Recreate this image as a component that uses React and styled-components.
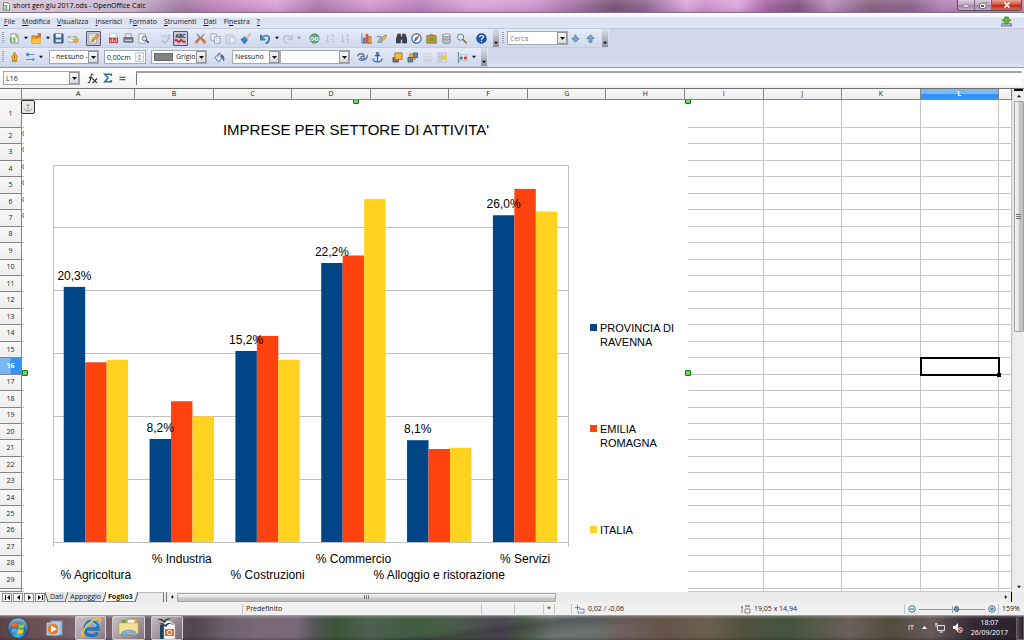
import React, { useState } from "react";
import styled, { createGlobalStyle, css } from "styled-components";

const GlobalStyle = createGlobalStyle`
  * {
    box-sizing: border-box;
  }
  body {
    margin: 0;
    font-family: "Open Sans", "Noto Sans", sans-serif;
    font-size: 7px;
    line-height: 10px;
    color: #1a1a1a;
  }
  button, input, select {
    font: inherit;
    color: inherit;
    margin: 0;
    padding: 0;
    border: none;
    border-radius: 0;
    background: none;
  }
`;

const Window = styled.div`
  display: flex;
  flex-direction: column;
  height: 100vh;
  overflow: hidden;
  background: #f0f0f0;
`;

/* ---------- title bar and menu ---------- */

const TitleBar = styled.header`
  display: flex;
  align-items: center;
  height: 13px;
  flex: none;
  padding-left: 2px;
  border-bottom: 1px solid #85708a;
  background:
    linear-gradient(90deg, rgba(240, 234, 244, 0.7), rgba(236, 228, 240, 0.55) 13%, transparent 18%),
    linear-gradient(rgba(255, 255, 255, 0.12), transparent 60%, rgba(110, 70, 120, 0.2)),
    linear-gradient(
      90deg, #a585ab 0%, #9a779c 17%, #c78ac0 22%, #d9a2d5 27%, #ad7aae 31%, #d49bd1 36%,
      #b77fb8 41%, #dba6d9 46%, #cf98d0 52%, #a574a8 56%, #795475 60%, #8f6791 63%,
      #dca5dc 67%, #cb92cb 69%, #dfa9df 72%, #a463a4 75%, #84557f 78%, #b98dbb 81%,
      #87617f 85%, #8c648c 89%, #b384b5 92%, #c58fc8 100%
    );
`;

const Title = styled.h1`
  margin: 0 auto 0 2px;
  font-size: 7px;
  font-weight: 400;
  color: #000;
`;

const WindowButtons = styled.div`
  display: flex;
  align-self: flex-start;
  height: 11px;
  margin-right: 2px;
  border: 1px solid #5f4a64;
  border-top: none;
  border-radius: 0 0 3px 3px;
  overflow: hidden;
`;

const WindowButton = styled.button`
  display: flex;
  align-items: center;
  justify-content: center;
  width: ${(p) => (p.$close ? 29 : 17)}px;
  border-right: ${(p) => (p.$close ? "none" : "1px solid #7d6683")};
  background: ${(p) =>
    p.$close
      ? "linear-gradient(#e9a79b, #d4533f 45%, #bb2412 50%, #d96a4e)"
      : "linear-gradient(#dccbe0, #c0a8c6 45%, #9d80a5 50%, #c5abc9)"};
`;

const MenuBar = styled.nav`
  display: flex;
  align-items: center;
  gap: 7px;
  height: 16px;
  flex: none;
  padding: 2px 12px 0 4px;
  border-bottom: 1px solid #c3c8d6;
  background: linear-gradient(#fff, #f2f5fb 25%, #dbe1f1 35%, #dfe5f4);
`;

const MenuItem = styled.button`
  u {
    text-underline-offset: 1px;
  }
`;

const UpdateButton = styled.button`
  display: flex;
  margin-left: auto;
`;

/* ---------- toolbars ---------- */

const Toolbars = styled.div`
  display: flex;
  flex-direction: column;
  flex: none;
  background: linear-gradient(#d3d9eb 80%, #dfe5f5);
  border-bottom: 1px solid #9299a5;
`;

const ToolbarRow = styled.div`
  display: flex;
  height: 19px;
`;

const Toolbar = styled.div`
  display: flex;
  align-items: center;
  height: 19px;
  padding-left: 2px;
  background: linear-gradient(#e6ebf8, #d8dff1 60%, #d0d8ec);
  border-bottom: 1px solid #c4cbdc;
`;

const Grip = styled.span`
  width: 2px;
  height: 12px;
  margin-right: 3px;
  background: repeating-linear-gradient(#98a2b8 0 1px, transparent 1px 2px);
`;

const ToolButton = styled.button`
  display: flex;
  align-items: center;
  justify-content: center;
  width: 15px;
  height: 15px;
  flex: none;
  opacity: ${(p) => (p.disabled ? 0.4 : 1)};
  ${(p) =>
    p.$pressed &&
    css`
      border: 1px solid #54596a;
      border-radius: 1px;
      background: #c3c8dc;
    `}
`;

const CaretButton = styled.button`
  display: flex;
  align-items: center;
  justify-content: center;
  width: 7px;
  height: 15px;
  opacity: ${(p) => (p.disabled ? 0.35 : 1)};
`;

const Separator = styled.span`
  width: ${(p) => (p.$wide ? 7 : 5)}px;
  height: 13px;
  flex: none;
`;

const Overflow = styled.button`
  display: flex;
  align-items: flex-end;
  justify-content: center;
  align-self: stretch;
  width: 6px;
  margin: 0 1px 0 4px;
  padding-bottom: 2px;
  background: linear-gradient(#dcdfe6, #8d929c);
`;

const Field = styled.div`
  display: flex;
  align-items: center;
  width: ${(p) => p.$width}px;
  height: 14px;
  margin-left: ${(p) => p.$gap || 0}px;
  padding-left: 2px;
  border: 1px solid #a3a8b3;
  background: #fff;
  select, input {
    flex: 1;
    min-width: 0;
    height: 12px;
    outline: none;
    appearance: none;
  }
  input::placeholder {
    color: #808080;
    opacity: 1;
  }
`;

const DropMark = styled.span`
  display: flex;
  align-items: center;
  justify-content: center;
  width: 10px;
  height: 12px;
  flex: none;
  border: 1px solid #92969e;
  background: linear-gradient(#f7f7f7, #d9d9d9);
  pointer-events: none;
`;

const Swatch = styled.span`
  width: 19px;
  height: 8px;
  flex: none;
  margin-right: 3px;
  background: #828282;
  border: 1px solid #6c6c6c;
`;

const Stepper = styled.div`
  display: flex;
  flex-direction: column;
  width: 9px;
  height: 10px;
  margin-right: 1px;
  border: 1px solid #c9ccd2;
  button {
    display: flex;
    align-items: center;
    justify-content: center;
    flex: 1;
    background: #f1f1f1;
  }
`;

/* ---------- formula bar ---------- */

const FormulaBar = styled.div`
  display: flex;
  align-items: center;
  height: 20px;
  flex: none;
  padding: 0 2px 0 3px;
  background: linear-gradient(#fff 15%, #f1f1f1);
`;

const FormulaTools = styled.div`
  display: flex;
  margin: 0 6px 0 5px;
`;

const FormulaInput = styled.input`
  flex: 1;
  min-width: 0;
  height: 14px;
  padding: 0 3px;
  border-top: 2px solid #a3a3a3;
  border-left: 1px solid #777;
  background: #fff;
  outline: none;
`;

/* ---------- sheet ---------- */

const SheetArea = styled.main`
  display: flex;
  flex: 1;
  min-height: 0;
  border-top: 1px solid #707070;
`;

const SheetView = styled.div`
  position: relative;
  flex: 1;
  min-width: 0;
  overflow: hidden;
  background: #fff;
`;

const Grid = styled.table`
  display: grid;
  width: 100%;
  height: 100%;
  grid-template-columns: 22px 114fr repeat(11, 79fr) 13fr;
  grid-template-rows: 11px 28px repeat(28, 33fr) 7fr;
  thead, tbody, tr {
    display: contents;
  }
`;

const Heading = styled.th`
  display: flex;
  align-items: center;
  justify-content: center;
  min-width: 0;
  min-height: 0;
  padding: 0;
  overflow: hidden;
  z-index: ${(p) => (p.scope === "col" ? 3 : 0)};
  font-weight: ${(p) => (p.$active ? 700 : 400)};
  color: ${(p) => (p.$active ? "#fff" : "#222")};
  border-right: 1px solid #858585;
  border-bottom: 1px solid #858585;
  background: ${(p) =>
    p.$active
      ? `linear-gradient(${p.scope === "row" ? "90deg" : "180deg"}, #7ab8f5 48%, #3294f8 52%)`
      : "linear-gradient(#f8f8f8, #eee)"};
`;

const Cell = styled.td`
  position: relative;
  min-width: 0;
  min-height: 0;
  padding: 1px 0 0;
  border-right: 1px solid #c6c6c6;
  border-bottom: 1px solid #c6c6c6;
  ${(p) =>
    p.$active &&
    css`
      outline: 2px solid #000;
      outline-offset: -1px;
      z-index: 1;
      &::after {
        content: "";
        position: absolute;
        right: -3px;
        bottom: -3px;
        width: 4px;
        height: 4px;
        background: #000;
      }
    `}
`;

// the chart is a floating object that lies over the cells
const ChartObject = styled.figure`
  position: absolute;
  top: 11px;
  left: 24px;
  width: 664px;
  height: 492px;
  margin: 0;
  background: #fff;
  z-index: 2;
`;

const Handle = styled.span`
  position: absolute;
  left: ${(p) => p.$x};
  top: ${(p) => p.$y}px;
  width: 6px;
  height: 6px;
  margin: -3px;
  border: 1px solid #087808;
  border-radius: 1px;
  background: #6ed66e;
`;

const AnchorMark = styled.span`
  position: absolute;
  left: 21px;
  top: 11px;
  display: flex;
  width: 14px;
  height: 14px;
  align-items: center;
  justify-content: center;
  border: 1px solid #333;
  border-radius: 2px;
  background: #e6e8e4;
  z-index: 3;
`;

const VScroll = styled.div`
  display: flex;
  flex-direction: column;
  align-items: center;
  width: 12px;
  flex: none;
  background: #ededed;
  border-left: 1px solid #e0e0e0;
`;

const SplitMark = styled.span`
  flex: none;
  background: #000;
  width: ${(p) => (p.$vertical ? "1px" : "9px")};
  height: ${(p) => (p.$vertical ? "10px" : "2px")};
`;

const ScrollButton = styled.button`
  display: flex;
  align-items: center;
  justify-content: center;
  width: 10px;
  height: 10px;
  flex: none;
`;

const VTrack = styled.div`
  flex: 1;
  width: 10px;
`;

const VThumb = styled.div`
  display: flex;
  align-items: center;
  justify-content: center;
  height: 48%;
  border: 1px solid #a0a0a0;
  border-radius: 1px;
  background: linear-gradient(90deg, #f5f5f5, #e2e2e2 45%, #c4c4c4 55%, #bfbfbf);
`;

/* ---------- sheet tabs ---------- */

const TabStrip = styled.div`
  display: flex;
  align-items: center;
  height: 10px;
  flex: none;
  padding: 0 12px 0 2px;
  background: #ececec;
`;

const TabNav = styled.div`
  display: flex;
  gap: 1px;
`;

const TabNavButton = styled.button`
  display: flex;
  align-items: center;
  justify-content: center;
  width: 10px;
  height: 9px;
  border: 1px solid #8e8e8e;
  background: #f6f6f6;
`;

const Tab = styled.button`
  height: 10px;
  padding: 0 2px;
  line-height: 9px;
  font-weight: ${(p) => (p.$active ? 700 : 400)};
  background: ${(p) => (p.$active ? "#fff" : "#e4e4e4")};
  border-bottom: 1px solid #777;
`;

const TabEdge = styled.svg`
  width: 3px;
  height: 10px;
  flex: none;
`;

const TabSpace = styled.span`
  width: 26px;
  height: 10px;
  border-top: 1px solid #bbb;
  border-right: 1px solid #777;
`;

const TabSplit = styled.span`
  width: 3px;
  height: 10px;
  border-right: 1px solid #777;
`;

const HTrack = styled.div`
  flex: 1;
`;

const HThumb = styled.div`
  display: flex;
  align-items: center;
  justify-content: center;
  width: 46%;
  height: 9px;
  border: 1px solid #a6a6a6;
  border-radius: 1px;
  background: linear-gradient(#f4f4f4, #e3e3e3 45%, #c9c9c9 55%, #c2c2c2);
`;

/* ---------- status bar ---------- */

const StatusBar = styled.footer`
  display: flex;
  align-items: center;
  height: 14px;
  flex: none;
  padding-top: 1px;
  background: #f1f0f0;
  border-bottom: 1px solid #9c9c9c;
`;

const StatusItem = styled.span`
  display: flex;
  align-items: center;
  gap: 3px;
  width: ${(p) => (p.$width ? `${p.$width}px` : "auto")};
  flex: ${(p) => p.$grow || "none"};
  height: 10px;
  padding-left: 3px;
  border-left: 1px solid ${(p) => (p.$plain ? "transparent" : "#c4c4c4")};
  white-space: nowrap;
`;

const ZoomSlider = styled.input`
  width: 66px;
  height: 9px;
  appearance: none;
  background:
    linear-gradient(#9aa0a8, #9aa0a8) 50% 50% / 1px 7px no-repeat,
    linear-gradient(#8e959f, #8e959f) 0 50% / 100% 1px no-repeat;
  &::-webkit-slider-thumb {
    appearance: none;
    width: 5px;
    height: 6px;
    border-radius: 3px;
    border: 1px solid #2f6584;
    background: #6499b5;
  }
`;

/* ---------- task bar ---------- */

const TaskBar = styled.div`
  display: flex;
  align-items: center;
  height: 24px;
  flex: none;
  padding-left: 7px;
  color: #fff;
  background:
    linear-gradient(rgba(255, 255, 255, 0.22), transparent 12%, transparent 85%, rgba(0, 0, 0, 0.2)),
    linear-gradient(172deg, transparent 46%, rgba(40, 28, 42, 0.3) 50%, transparent 58%),
    linear-gradient(
      90deg, #5b444a 0%, #6d5158 4%, #7c6670 8%, #6b5a63 14%, #52454c 19%, #6b606b 22%, #796875 25%,
      #78687a 29%, #4f5450 31%, #3a5639 33%, #50604f 36%, #3f5c43 40%, #4a5d49 44%,
      #4d4754 49%, #4a5a48 51%, #6e7673 54%, #68706c 58%, #705f5c 61%, #655348 65%,
      #6b5e4e 69%, #4f513d 73%, #44543e 77%, #6a5f57 83%, #504c3e 87%, #67595a 91%, #352a33 95%, #29212a 100%
    );
`;

const TaskButton = styled.button`
  display: flex;
  align-items: center;
  justify-content: center;
  width: ${(p) => p.$width || 31}px;
  height: 24px;
  margin-left: ${(p) => p.$gap || 0}px;
  ${(p) =>
    p.$open &&
    css`
      border: 1px solid rgba(235, 230, 235, 0.65);
      border-radius: 2px;
      background: linear-gradient(135deg, rgba(255, 255, 255, 0.6), rgba(210, 200, 210, 0.25));
    `}
`;

const Tray = styled.div`
  display: flex;
  align-items: center;
  gap: 8px;
  margin-left: auto;
`;

const Clock = styled.time`
  text-align: center;
`;

const ShowDesktop = styled.button`
  width: 8px;
  height: 24px;
  border: 1px solid #6b616b;
  background: linear-gradient(90deg, #574c57, #28212a);
`;

/* ---------- drawings ---------- */

const glyphs = {
  calc: (
    <>
      <path d="M2 1h6l2 2v8H2z" fill="#f5f8ee" stroke="#4f7841" />
      <path d="M1 4h6v6H1z" fill="#69a84c" />
      <path d="M2 6h4M2 8h4M4 5v5" stroke="#fff" strokeWidth=".7" />
      <path d="M7 2h3v3" stroke="#d8c335" fill="none" strokeWidth="1.5" />
    </>
  ),
  newDoc: (
    <>
      <path d="M2 1h6l2 2v8H2z" fill="#f4f8f0" stroke="#6e7d68" strokeWidth=".8" />
      <path d="M1 5h6v5H1z" fill="#68a443" />
      <path d="M2 6.5h4M2 8.5h4M4 5v5" stroke="#fff" strokeWidth=".7" />
      <path d="M7 0l1 2 3 0-2 2 0 2-2-2z" fill="#a9c43d" />
    </>
  ),
  open: (
    <>
      <path d="M1 3h4l1 1h4v7H1z" fill="#eda521" stroke="#b46b13" strokeWidth=".8" />
      <path d="M2 6h9l-1 5H1z" fill="#ffc845" />
      <path d="M5 6l4-4M7 1h3v3" stroke="#db4f1c" fill="none" strokeWidth="1.4" />
    </>
  ),
  save: (
    <>
      <path d="M1 1h10v10H1z" fill="#426f92" stroke="#294d6c" strokeWidth=".8" />
      <path d="M3 1h6v4H3z" fill="#e9eff4" />
      <path d="M3 7h6v3H3z" fill="#d7e0e7" />
    </>
  ),
  mail: (
    <>
      <path d="M0 4h9v6H0z" fill="#f6f3e8" stroke="#8c8e92" strokeWidth=".8" />
      <path d="M0 4l4.500 3L9 4" fill="none" stroke="#8c8e92" strokeWidth=".7" />
      <path d="M6 7h3V5l3 3-3 3V9H6z" fill="#edb535" stroke="#a67a1a" strokeWidth=".5" />
    </>
  ),
  edit: (
    <>
      <path d="M1 1h8v10H1z" fill="#fff" stroke="#8c8c94" strokeWidth=".7" />
      <path d="M2 3h4M2 5h3M2 7h2" stroke="#9db0c4" strokeWidth=".8" />
      <path d="M4 9l1-3 5-5 2 2-5 5z" fill="#f0a52c" stroke="#a4521b" strokeWidth=".6" />
      <path d="M2 9h5" stroke="#5aa43d" />
    </>
  ),
  pdf: (
    <>
      <path d="M2 0h6l2 2v10H2z" fill="#f8f8f8" stroke="#9a9a9a" strokeWidth=".7" />
      <path d="M1 5h10v6H1z" fill="#cf3e3e" />
      <path d="M3 10V7M5 10V6M7 10V8M9 10V6" stroke="#fff" strokeWidth=".8" />
    </>
  ),
  print: (
    <>
      <path d="M3 1h6v5H3z" fill="#fff" stroke="#707680" strokeWidth=".8" />
      <path d="M1 5h10v5H1z" fill="#7f858d" stroke="#4c515a" strokeWidth=".8" />
      <path d="M2 8h8" stroke="#dfe3e8" />
      <path d="M4 3h4" stroke="#aaa" strokeWidth=".7" />
    </>
  ),
  preview: (
    <>
      <path d="M1 1h7v10H1z" fill="#fff" stroke="#888" strokeWidth=".8" />
      <circle cx="7" cy="6" r="2.600" fill="#cce0ee" stroke="#586577" />
      <path d="M9 8l3 3" stroke="#444" strokeWidth="1.500" />
    </>
  ),
  spell: (
    <>
      <path d="M1 2l2 3 2-3M6 2v3h2M9 2h2v3H9z" stroke="#7d8490" fill="none" />
      <path d="M2 8l3 3 5-5" stroke="#7d8490" strokeWidth="1.500" fill="none" />
    </>
  ),
  cut: (
    <>
      <path d="M2 1l7 8M10 1L3 9" stroke="#7f8a93" strokeWidth="1.500" />
      <path d="M5 5l-4 5M7 5l4 5" stroke="#e06c1c" strokeWidth="1.800" />
      <circle cx="2" cy="9.500" r="1.600" fill="none" stroke="#e06c1c" />
      <circle cx="10" cy="9.500" r="1.600" fill="none" stroke="#e06c1c" />
    </>
  ),
  copy: (
    <>
      <path d="M1 1h6v7H1z" fill="#f0f2f6" stroke="#8c94a2" strokeWidth=".8" />
      <path d="M5 4h6v7H5z" fill="#fafbfc" stroke="#7b8494" strokeWidth=".8" />
      <path d="M6.500 6h3M6.500 8h3" stroke="#a5b3c5" strokeWidth=".8" />
    </>
  ),
  paste: (
    <>
      <path d="M1 2h8v9H1z" fill="#cdd1d9" stroke="#858c98" strokeWidth=".8" />
      <path d="M5 5h6v6H5z" fill="#fff" stroke="#858c98" strokeWidth=".8" />
    </>
  ),
  brush: (
    <>
      <path d="M8 4l3-4 1 1-3 4z" fill="#dfb13c" />
      <path d="M5 3l4 3-1 2-4-3z" fill="#93a4b5" />
      <path d="M1 7l3-2 4 3-3 4z" fill="#3d7fd0" stroke="#285a9c" strokeWidth=".6" />
    </>
  ),
  undo: (
    <>
      <path d="M1 2v5h5M2 6c3-5 8-3 8 0s-2 5-4 5" fill="none" stroke="#447ba2" strokeWidth="2.200" />
      <path d="M3 5c3-3 6-2 6 1" fill="none" stroke="#b6dcf0" strokeWidth=".8" />
    </>
  ),
  redo: (
    <path d="M11 2v5H6M10 6C7 1 2 3 2 6s2 5 4 5" fill="none" stroke="#8995a3" strokeWidth="1.600" />
  ),
  globe: (
    <>
      <circle cx="6" cy="6" r="5" fill="#5c9bc2" stroke="#3d7d37" />
      <path d="M2 3c2-2 6-2 7 0L6 5zM2 9h7l-3 2z" fill="#69b33a" />
      <path d="M2 5h3v3H2zM7 5h3v3H7zM4 6.500h4" fill="none" stroke="#eef3f0" />
    </>
  ),
  sort: (
    <>
      <path d="M4 2v8M2 8l2 2 2-2" stroke="#7a8491" fill="none" />
      <path d="M8 2h2v3M8 7h2v4" stroke="#7a8491" fill="none" />
    </>
  ),
  chart: (
    <>
      <path d="M1 0v11h11" stroke="#6e7d90" fill="none" />
      <path d="M2 5h3v6H2z" fill="#417fc0" />
      <path d="M5 1h3v10H5z" fill="#de5a24" />
      <path d="M8 4h3v7H8z" fill="#e9a93d" stroke="#9a4a1c" strokeWidth=".6" />
    </>
  ),
  draw: (
    <>
      <path d="M1 4h5l-4 6h5" stroke="#4d7fb5" fill="none" />
      <path d="M5 9l1-3 4-4 2 1-4 5z" fill="#eab43c" stroke="#9d651d" strokeWidth=".6" />
    </>
  ),
  find: (
    <path d="M2 1h3v3h2V1h3l2 6v4H7V7H5v4H0V7z" fill="#38414d" stroke="#20252c" strokeWidth=".5" />
  ),
  compass: (
    <>
      <circle cx="6" cy="6" r="5" fill="#f4f7fb" stroke="#3a5e96" strokeWidth="1.300" />
      <path d="M9.500 2L7 7 5 5z" fill="#de4d2a" />
      <path d="M2.500 10L5 5l2 2z" fill="#3f68ab" />
    </>
  ),
  gallery: (
    <>
      <path d="M4 3l2-2 2 2" fill="none" stroke="#6d5a2c" />
      <path d="M1 3h10v8H1z" fill="#d8a32c" stroke="#8b6416" />
      <path d="M3 5h6v4H3z" fill="#6f9d54" />
    </>
  ),
  database: (
    <>
      <path d="M2 2v8c0 2 8 2 8 0V2z" fill="#b9bfc7" stroke="#6f7882" strokeWidth=".8" />
      <ellipse cx="6" cy="2.500" rx="4" ry="1.600" fill="#eef1f4" stroke="#6f7882" strokeWidth=".8" />
      <path d="M2 6c0 2 8 2 8 0" fill="none" stroke="#7a838d" strokeWidth=".7" />
    </>
  ),
  magnify: (
    <>
      <circle cx="5" cy="4.500" r="3.400" fill="#d9edf8" stroke="#69747f" />
      <path d="M7.500 7l4 4" stroke="#8a6a3a" strokeWidth="1.700" />
    </>
  ),
  help: (
    <>
      <circle cx="6" cy="6" r="5.400" fill="#215aa8" stroke="#163d78" strokeWidth=".6" />
      <path d="M4 4.500c0-2.500 4.300-2.300 4 0C7.800 6 6 5.800 6 7.500M6 8.500v1.400" stroke="#fff" strokeWidth="1.300" fill="none" />
    </>
  ),
  down: (
    <path d="M6 11L1 6h3V4l2-3 2 3v2h3z" fill="#78abc9" stroke="#3b6d8e" strokeWidth=".9" />
  ),
  up: <path d="M6 1l5 5H8v5H4V6H1z" fill="#78abc9" stroke="#3b6d8e" strokeWidth=".9" />,
  pen: (
    <>
      <path d="M6 0l3 5-1 4H4L3 5z" fill="#f3b72f" stroke="#a56d16" strokeWidth=".7" />
      <path d="M3 9h6v2H3z" fill="#d18a23" />
      <path d="M6 3v4" stroke="#7c4c12" strokeWidth=".8" />
    </>
  ),
  arrows: (
    <>
      <path d="M11 3H3M1 3l3-2v4zM1 9h8" stroke="#4281b4" fill="#4281b4" />
      <path d="M12 9L9 7v4z" fill="#4281b4" />
    </>
  ),
  bucket: (
    <>
      <path d="M1 6l5-5 4 4-5 6z" fill="#dfe6ee" stroke="#53677e" strokeWidth=".9" />
      <path d="M7 3c4 0 5 3 4 7-2-1-1-4-4-4z" fill="#3575a7" />
      <path d="M4 5l2-4" stroke="#53677e" />
    </>
  ),
  rotate: (
    <path d="M1 5c0-4 6-4 7-1M11 3c1 6-7 8-9 4M4 6c0-2 4-2 4 0s-4 2-4 0" stroke="#526f91" strokeWidth="1.300" fill="none" />
  ),
  anchor: (
    <path d="M6 3v8M3 4h6M1 7c0 5 10 5 10 0M4.800 1.800a1.200 1.200 0 1 0 2.400 0 1.200 1.200 0 1 0-2.400 0" stroke="#2e6bab" strokeWidth="1.300" fill="none" />
  ),
  front: (
    <>
      <path d="M1 6h6v5H1z" fill="#777" stroke="#333" strokeWidth=".7" />
      <path d="M3 1h8v7H3z" fill="#f8bd2b" stroke="#95661a" strokeWidth=".8" />
    </>
  ),
  back: (
    <>
      <path d="M3 2h6v6H3z" fill="#f8bd2b" stroke="#95661a" strokeWidth=".7" />
      <path d="M1 6h5v5H1zM7 1h5v5H7z" fill="#6488a9" stroke="#3a4855" strokeWidth=".7" />
    </>
  ),
  grid: (
    <path d="M2 2h8v8H2zM2 5h8M2 8h8M5 2v8M8 2v8" fill="#eee" stroke="#a3a3a3" strokeWidth=".6" />
  ),
  background: (
    <>
      <path d="M1 1h9v10H1z" fill="#e5e8ef" stroke="#9eabba" strokeWidth=".7" />
      <circle cx="7.500" cy="6" r="3" fill="#f6cb31" />
      <path d="M2 3h4M2 5h3M2 7h3M2 9h4" stroke="#7c95b2" strokeWidth=".7" />
    </>
  ),
  align: (
    <>
      <path d="M1.500 0v12" stroke="#398549" />
      <path d="M2 3h9v6H2z" fill="#edf1f7" stroke="#8d99aa" strokeWidth=".6" />
      <path d="M3 5h3v3H3z" fill="#4672af" />
      <circle cx="9" cy="6.500" r="1.800" fill="#d83d32" />
    </>
  ),
  fx: (
    <path d="M7 1.500C4.500 0 4.500 4 4 6s-1 6-3 4M2 5h4M6 6l5 5M11 6l-5 5" stroke="#2e3033" strokeWidth="1.200" fill="none" />
  ),
  sum: (
    <path d="M10 3.500V1.500H2l4 4.500-4 4.500h8v-2" stroke="#2f7094" strokeWidth="1.900" fill="none" />
  ),
  equals: <path d="M2 4.500h8M2 7.500h8" stroke="#5d6268" strokeWidth="1.500" />,
  update: (
    <>
      <path d="M1 8h10l1 3H0z" fill="#a5b0bd" stroke="#5a6876" strokeWidth=".7" />
      <path d="M4 1h4v3h3L6 9 1 4h3z" fill="#62b72e" stroke="#317a16" strokeWidth=".7" />
    </>
  ),
};

const Icon = ({ name, size = 11 }) => (
  <svg width={size} height={size} viewBox="0 0 12 12" aria-hidden="true">
    {glyphs[name]}
  </svg>
);

const arrowPaths = {
  down: "M0 1h5L2.500 4z",
  up: "M0 4h5L2.500 1z",
  left: "M4 0v5L1 2.500z",
  right: "M1 0v5l3-2.500z",
  first: "M0 0h1v5H0zM5 0v5L2 2.500z",
  last: "M4 0h1v5H4zM0 0v5l3-2.500z",
};

const Arrow = ({ dir = "down", size = 5, color = "#111" }) => (
  <svg width={size} height={size} viewBox="0 0 5 5" aria-hidden="true">
    <path d={arrowPaths[dir]} fill={color} />
  </svg>
);

const SpellOn = () => (
  <svg width="13" height="13" viewBox="0 0 13 13">
    <text x="6.500" y="6" fontSize="5" fontWeight="700" textAnchor="middle" fill="#222">
      ABC
    </text>
    <path d="M1 9q1-2 2.500 0t2.500 0 2.500 0 3 0" stroke="#cf2626" strokeWidth="1.800" fill="none" />
  </svg>
);

/* ---------- data ---------- */

const menus = [
  ["", "F", "ile"],
  ["", "M", "odifica"],
  ["", "V", "isualizza"],
  ["", "I", "nserisci"],
  ["F", "o", "rmato"],
  ["", "S", "trumenti"],
  ["", "D", "ati"],
  ["Fi", "n", "estra"],
  ["", "?", ""],
];

const standardTools = [
  { icon: "newDoc", label: "Nuovo", caret: true },
  { icon: "open", label: "Apri", caret: true },
  { icon: "save", label: "Salva" },
  { icon: "mail", label: "Documento come e-mail" },
  null,
  { icon: "edit", label: "Modifica file", pressed: true },
  null,
  { icon: "pdf", label: "Esporta come PDF" },
  { icon: "print", label: "Stampa" },
  { icon: "preview", label: "Anteprima" },
  { wide: true },
  { icon: "spell", label: "Ortografia", disabled: true },
  { icon: "spellOn", label: "Controllo automatico", pressed: true },
  null,
  { icon: "cut", label: "Taglia" },
  { icon: "copy", label: "Copia" },
  { icon: "paste", label: "Incolla", disabled: true },
  { icon: "brush", label: "Pennello" },
  null,
  { icon: "undo", label: "Annulla", caret: true },
  { icon: "redo", label: "Ripristina", caret: true, disabled: true },
  null,
  { icon: "globe", label: "Collegamento" },
  { icon: "sort", label: "Ordine crescente", disabled: true },
  { icon: "sort", label: "Ordine decrescente", disabled: true },
  { wide: true },
  { icon: "chart", label: "Grafico" },
  { icon: "draw", label: "Disegno" },
  null,
  { icon: "find", label: "Cerca e sostituisci" },
  { icon: "compass", label: "Navigatore" },
  { icon: "gallery", label: "Galleria" },
  { icon: "database", label: "Sorgenti dati" },
  { icon: "magnify", label: "Zoom" },
  null,
  { icon: "help", label: "Guida" },
];

const objectTools = [
  { icon: "rotate", label: "Ruota" },
  { icon: "anchor", label: "Ancoraggio" },
  null,
  { icon: "front", label: "In primo piano" },
  { icon: "back", label: "In secondo piano" },
  { icon: "grid", label: "Griglia", disabled: true },
  { icon: "background", label: "Sullo sfondo" },
  null,
  { icon: "align", label: "Allineamento", caret: true },
];

const columns = "ABCDEFGHIJKL".split("");
const rows = Array.from({ length: 29 }, (_, i) => i + 1);

const series = [
  { lines: ["PROVINCIA DI", "RAVENNA"], color: "#004586" },
  { lines: ["EMILIA", "ROMAGNA"], color: "#ff420e" },
  { lines: ["ITALIA"], color: "#ffd320" },
];

const categories = [
  { name: "% Agricoltura", values: [20.3, 14.3, 14.5], label: "20,3%" },
  { name: "% Industria", values: [8.2, 11.2, 10], label: "8,2%" },
  { name: "% Costruzioni", values: [15.2, 16.4, 14.5], label: "15,2%" },
  { name: "% Commercio", values: [22.2, 22.8, 27.3], label: "22,2%" },
  { name: "% Alloggio e ristorazione", values: [8.1, 7.4, 7.5], label: "8,1%" },
  { name: "% Servizi", values: [26, 28.1, 26.3], label: "26,0%" },
];

/* ---------- components ---------- */

const Tools = ({ items }) =>
  items.map((tool, i) =>
    tool && tool.icon ? (
      <React.Fragment key={i}>
        <ToolButton aria-label={tool.label} $pressed={tool.pressed} disabled={tool.disabled}>
          {tool.icon === "spellOn" ? <SpellOn /> : <Icon name={tool.icon} />}
        </ToolButton>
        {tool.caret && (
          <CaretButton aria-label={`${tool.label}, opzioni`} disabled={tool.disabled}>
            <Arrow size={4} />
          </CaretButton>
        )}
      </React.Fragment>
    ) : (
      <Separator key={i} $wide={tool !== null} />
    )
  );

const Combo = ({ label, width, gap, swatch, options }) => (
  <Field $width={width} $gap={gap}>
    {swatch && <Swatch />}
    <select aria-label={label}>
      {options.map((option) => (
        <option key={option}>{option}</option>
      ))}
    </select>
    <DropMark>
      <Arrow />
    </DropMark>
  </Field>
);

const PLOT = { left: 29, top: 65, width: 515, height: 377, max: 30 };

const Chart = () => {
  const step = PLOT.width / categories.length;
  const bar = step / 4;
  const bottom = PLOT.top + PLOT.height;
  const yOf = (value) => bottom - (value / PLOT.max) * PLOT.height;

  return (
    <svg width="664" height="492" fontFamily="'Liberation Sans', Arial, sans-serif" fontSize="12">
      <text x="332" y="35" fontSize="15" textAnchor="middle">
        IMPRESE PER SETTORE DI ATTIVITA'
      </text>
      <g stroke="#c0c0c0" fill="none" shapeRendering="crispEdges">
        {[0, 5, 10, 15, 20, 25, 30].map((tick) => (
          <path key={tick} d={`M${PLOT.left} ${yOf(tick)}h${PLOT.width}`} />
        ))}
        <path d={`M${PLOT.left} ${PLOT.top}v${PLOT.height + 5}`} />
        <path d={`M${PLOT.left + PLOT.width} ${PLOT.top}v${PLOT.height + 5}`} />
      </g>
      {categories.map((cat, i) =>
        cat.values.map((value, s) => (
          <rect
            key={`${i}-${s}`}
            x={PLOT.left + i * step + bar / 2 + s * bar}
            y={yOf(value)}
            width={bar}
            height={bottom - yOf(value)}
            fill={series[s].color}
          />
        ))
      )}
      {categories.map((cat, i) => (
        <g key={cat.name} textAnchor="middle">
          <text x={PLOT.left + i * step + bar} y={yOf(cat.values[0]) - 7}>
            {cat.label}
          </text>
          <text x={PLOT.left + (i + 0.5) * step} y={i % 2 ? 463 : 479}>
            {cat.name}
          </text>
        </g>
      ))}
      {series.map((item, i) => (
        <g key={item.color} fontSize="11">
          <rect x="566" y={224 + i * 101} width="7" height="7" fill={item.color} />
          {item.lines.map((line, n) => (
            <text key={line} x="576" y={232 + i * 101 + n * 14}>
              {line}
            </text>
          ))}
        </g>
      ))}
    </svg>
  );
};

const Sheet = () => (
  <SheetArea>
    <SheetView>
      <Grid>
        <thead>
          <tr>
            <Heading scope="col" aria-label="Seleziona tutto" />
            {columns.map((col) => (
              <Heading key={col} scope="col" $active={col === "L"}>
                {col}
              </Heading>
            ))}
            <Heading scope="col" aria-label="M" />
          </tr>
        </thead>
        <tbody>
          {rows.map((row) => (
            <tr key={row}>
              <Heading scope="row" $active={row === 16}>
                {row}
              </Heading>
              {columns.map((col) => (
                <Cell key={col} $active={row === 16 && col === "L"}>
                  {col === "A" && row > 1 && row < 8 ? "C" : null}
                </Cell>
              ))}
              <Cell />
            </tr>
          ))}
          <tr>
            <Heading scope="row" aria-label="30" />
            {columns.map((col) => (
              <Cell key={col} />
            ))}
            <Cell />
          </tr>
        </tbody>
      </Grid>
      <ChartObject>
        <Chart />
        <Handle $x="50%" $y={1} />
        <Handle $x="100%" $y={1} />
        <Handle $x="1px" $y={273} />
        <Handle $x="100%" $y={273} />
      </ChartObject>
      <AnchorMark>
        <svg width="10" height="10" viewBox="0 0 12 12">
          <path d="M6 2v9M4 4h4M1 7c1 5 9 5 10 0" stroke="#8b918b" fill="none" />
        </svg>
      </AnchorMark>
    </SheetView>
    <VScroll>
      <SplitMark />
      <ScrollButton aria-label="Su">
        <Arrow dir="up" size={4} />
      </ScrollButton>
      <VTrack>
        <VThumb>
          <svg width="5" height="5">
            <path d="M0 .5h5M0 2.500h5M0 4.500h5" stroke="#777" />
          </svg>
        </VThumb>
      </VTrack>
      <ScrollButton aria-label="Giù">
        <Arrow size={4} />
      </ScrollButton>
    </VScroll>
  </SheetArea>
);

const tabs = ["Dati", "Appoggio", "Foglio3"];

const SheetTabs = () => {
  const [active, setActive] = useState("Foglio3");

  return (
    <TabStrip>
      <TabNav>
        {["first", "left", "right", "last"].map((dir) => (
          <TabNavButton key={dir} aria-label={dir}>
            <Arrow dir={dir} />
          </TabNavButton>
        ))}
      </TabNav>
      <TabEdge viewBox="0 0 3 10">
        <path d="M0 0l3 10" stroke="#555" />
      </TabEdge>
      {tabs.map((tab) => (
        <React.Fragment key={tab}>
          <Tab $active={tab === active} onClick={() => setActive(tab)}>
            {tab}
          </Tab>
          <TabEdge viewBox="0 0 3 10">
            <path d="M3 0L0 10" stroke="#555" />
          </TabEdge>
        </React.Fragment>
      ))}
      <TabSpace />
      <TabSplit />
      <ScrollButton aria-label="Sinistra">
        <Arrow dir="left" size={4} />
      </ScrollButton>
      <HTrack>
        <HThumb>
          <svg width="5" height="4">
            <path d="M.5 0v4M2.500 0v4M4.500 0v4" stroke="#777" />
          </svg>
        </HThumb>
      </HTrack>
      <ScrollButton aria-label="Destra">
        <Arrow dir="right" size={4} />
      </ScrollButton>
      <SplitMark $vertical />
    </TabStrip>
  );
};

const ZoomButton = ({ plus }) => (
  <button aria-label={plus ? "Ingrandisci" : "Riduci"}>
    <svg width="8" height="8" viewBox="0 0 8 8" style={{ display: "block" }}>
      <circle cx="4" cy="4" r="3.300" fill="#e2edf5" stroke="#457a9e" />
      <path d={plus ? "M2 4h4M4 2v4" : "M2 4h4"} stroke="#326a94" />
    </svg>
  </button>
);

const Status = () => (
  <StatusBar>
    <StatusItem $plain $grow="0 1 242px" />
    <StatusItem $grow="0 1 239px">Predefinito</StatusItem>
    <StatusItem $width={33} />
    <StatusItem $width={29} />
    <StatusItem $width={11}>*</StatusItem>
    <StatusItem $width={17} />
    <StatusItem $grow="0 1 166px">
      <svg width="10" height="9" viewBox="0 0 10 9">
        <path d="M2.500 0v5M0 2.500h5M4 4h5v4H3V6" stroke="#7580bd" fill="none" />
      </svg>
      0,02 / -0,06
    </StatusItem>
    <StatusItem $plain $grow="1 1 166px">
      <svg width="10" height="9" viewBox="0 0 10 9">
        <path d="M1 1v7M0 2h2M4 1h5M5 0v2M8 0v2M4 4h5v4H4z" stroke="#686868" fill="none" strokeWidth=".8" />
      </svg>
      19,05 x 14,94
    </StatusItem>
    <StatusItem $width={94}>
      <ZoomButton />
      <ZoomSlider type="range" min="20" max="280" defaultValue="170" aria-label="Zoom" />
      <ZoomButton plus />
    </StatusItem>
    <StatusItem $width={26}>159%</StatusItem>
  </StatusBar>
);

const Tasks = () => (
  <TaskBar>
    <TaskButton $width={22} aria-label="Start">
      <svg width="22" height="22" viewBox="0 0 22 22">
        <defs>
          <radialGradient id="orb" cx="50%" cy="85%" r="80%">
            <stop offset="0" stopColor="#4fc4e8" />
            <stop offset=".5" stopColor="#22659a" />
            <stop offset="1" stopColor="#8fb2c8" />
          </radialGradient>
        </defs>
        <circle cx="11" cy="11" r="10.300" fill="url(#orb)" stroke="#253a55" strokeWidth=".8" />
        <path d="M5 7q3-2 5.500 0l-.5 4q-3-1.500-5.500 0z" fill="#ec6630" />
        <path d="M11.500 7q3 1.500 6 0l-.8 4q-3 1.500-5.700 0z" fill="#91c83e" />
        <path d="M4.500 12q3-1.500 5.500 0l-.6 4q-2.500-1.500-5-.3z" fill="#50aae5" />
        <path d="M11 12q3 1.500 5.700 0l-.8 4q-2.500 1.500-5.400 0z" fill="#f7cc39" />
      </svg>
    </TaskButton>
    <TaskButton $width={22} $gap={14} aria-label="Lettore multimediale">
      <svg width="17" height="17" viewBox="0 0 17 17">
        <path d="M5 1h11v14H5z" fill="#a9c8de" stroke="#6f9dbd" />
        <path d="M1 3h11v12H1z" fill="#8dbada" stroke="#d9e6ef" strokeWidth=".7" />
        <circle cx="7" cy="9" r="5.200" fill="#ee7823" />
        <path d="M5 5.500v7l6-3.500z" fill="#fff" />
      </svg>
    </TaskButton>
    <TaskButton $open $gap={10} aria-label="Internet Explorer">
      <svg width="22" height="22" viewBox="0 0 22 22">
        <path d="M6 12h12c0-10-13-10-13 0 0 8 10 8 12.500 3.500" stroke="#1f78be" strokeWidth="3.400" fill="none" />
        <path d="M16.500 9C14 4.500 7 5 5.500 10" stroke="#7ed0f2" strokeWidth="1.200" fill="none" />
        <path d="M3 20C-1 15 14-1 20 2c1 1 0 3-1 4" stroke="#f2c23e" strokeWidth="1.800" fill="none" />
      </svg>
    </TaskButton>
    <TaskButton $open $gap={6} $width={33} aria-label="Esplora risorse">
      <svg width="22" height="20" viewBox="0 0 22 20">
        <path d="M2 3h6l1-2h9l1 2v13H2z" fill="#dcbd5b" stroke="#b78d34" strokeWidth=".6" />
        <path d="M4 2h4v3H4z" fill="#5aa35c" />
        <path d="M10 2h6v3h-6z" fill="#fff" />
        <path d="M1 5h19v11H1z" fill="#f4e196" stroke="#c7a34e" strokeWidth=".6" />
        <path d="M4 18v-4q7-4 14 0v4h-3v-3H7v3z" fill="#79b9dc" stroke="#4d8ab5" strokeWidth=".5" />
      </svg>
    </TaskButton>
    <TaskButton $open $gap={6} $width={32} aria-label="OpenOffice Calc">
      <svg width="22" height="22" viewBox="0 0 22 22">
        <path d="M4 8h8v14H4z" fill="#23435d" />
        <path d="M8 4h7l4 4v14H8z" fill="#f7f7f5" stroke="#aaa" strokeWidth=".5" />
        <path d="M1 2q5-1 7 2 3-4 7-2-5 0-6 4Q6 3 1 2zM3 7q4-2 6 1 3-3 7-2-5 1-6 4-3-3-7-3z" fill="#182f46" />
        <path d="M15 4l4 4h-4z" fill="#bbb" />
        <path d="M9 12h9v7H9z" fill="#e86c22" />
        <circle cx="13.500" cy="15.500" r="2.200" fill="none" stroke="#fff" />
      </svg>
    </TaskButton>
    <Tray>
      <span>IT</span>
      <button aria-label="Mostra icone nascoste">
        <Arrow dir="up" color="#fff" />
      </button>
      <svg width="10" height="10" viewBox="0 0 10 10">
        <path d="M2.500 2.500h7v5h-7zM4 9h4M1 0v4M0 1h3" stroke="#ddd" fill="none" />
      </svg>
      <svg width="10" height="10" viewBox="0 0 10 10">
        <path d="M0 3h2l3-3v9L2 6H0z" fill="#f3f3f3" />
        <circle cx="7" cy="7" r="2.500" fill="#d42b2b" stroke="#fff" strokeWidth=".6" />
        <path d="M5.500 5.500l3 3" stroke="#fff" strokeWidth=".8" />
      </svg>
      <Clock dateTime="2017-09-26T18:07">
        18:07
        <br />
        26/09/2017
      </Clock>
      <ShowDesktop aria-label="Mostra desktop" />
    </Tray>
  </TaskBar>
);

const App = () => (
  <>
    <GlobalStyle />
    <Window>
      <TitleBar>
        <Icon name="calc" size={9} />
        <Title>short gen giu 2017.ods - OpenOffice Calc</Title>
        <WindowButtons>
          <WindowButton aria-label="Riduci a icona">
            <svg width="8" height="6">
              <path d="M1 3h6v2H1z" fill="#fff" stroke="#555" strokeWidth=".5" />
            </svg>
          </WindowButton>
          <WindowButton aria-label="Ripristina">
            <svg width="8" height="7" viewBox="0 0 8 7">
              <path d="M3 1h4v4M1.500 2.500h4v3h-4z" fill="none" stroke="#444" strokeWidth="2" />
              <path d="M3 1h4v4M1.500 2.500h4v3h-4z" fill="none" stroke="#fff" />
            </svg>
          </WindowButton>
          <WindowButton $close aria-label="Chiudi">
            <svg width="8" height="6" viewBox="0 0 8 6">
              <path d="M1.500 .5l5 5M6.500 .5l-5 5" stroke="#fff" strokeWidth="1.600" />
            </svg>
          </WindowButton>
        </WindowButtons>
      </TitleBar>
      <MenuBar>
        {menus.map(([before, key, after]) => (
          <MenuItem key={before + key + after}>
            {before}
            <u>{key}</u>
            {after}
          </MenuItem>
        ))}
        <UpdateButton aria-label="Aggiornamenti">
          <Icon name="update" />
        </UpdateButton>
      </MenuBar>
      <Toolbars>
        <ToolbarRow>
          <Toolbar>
            <Grip />
            <Tools items={standardTools} />
            <Overflow aria-label="Altri comandi">
              <Arrow size={4} />
            </Overflow>
          </Toolbar>
          <Toolbar>
            <Grip />
            <Field $width={61}>
              <input aria-label="Cerca" placeholder="Cerca" />
              <DropMark>
                <Arrow />
              </DropMark>
            </Field>
            <ToolButton aria-label="Cerca successivo">
              <Icon name="down" size={9} />
            </ToolButton>
            <ToolButton aria-label="Cerca precedente">
              <Icon name="up" size={9} />
            </ToolButton>
            <Overflow aria-label="Altri comandi">
              <Arrow size={4} />
            </Overflow>
          </Toolbar>
        </ToolbarRow>
        <ToolbarRow>
          <Toolbar>
            <Grip />
            <ToolButton aria-label="Linea">
              <Icon name="pen" />
            </ToolButton>
            <ToolButton aria-label="Estremità linea">
              <Icon name="arrows" size={10} />
            </ToolButton>
            <CaretButton aria-label="Estremità linea, opzioni">
              <Arrow size={4} />
            </CaretButton>
            <Combo label="Stile linea" width={50} gap={5} options={["- nessuno -", "Continuo"]} />
            <Field $width={42} $gap={5}>
              <input aria-label="Spessore linea" defaultValue="0,00cm" />
              <Stepper>
                <button aria-label="Aumenta">
                  <Arrow dir="up" size={3} color="#888" />
                </button>
                <button aria-label="Diminuisci">
                  <Arrow size={3} color="#888" />
                </button>
              </Stepper>
            </Field>
            <Combo label="Colore linea" width={56} gap={5} swatch options={["Grigio", "Nero"]} />
            <Separator />
            <ToolButton aria-label="Area">
              <Icon name="bucket" />
            </ToolButton>
            <Combo label="Riempimento" width={48} gap={5} options={["Nessuno", "Colore"]} />
            <Combo label="Colore riempimento" width={70} options={[""]} />
            <Separator />
            <Tools items={objectTools} />
            <Overflow aria-label="Altri comandi">
              <Arrow size={4} />
            </Overflow>
          </Toolbar>
        </ToolbarRow>
      </Toolbars>
      <FormulaBar>
        <Field $width={77}>
          <input aria-label="Casella del nome" defaultValue="L16" />
          <DropMark>
            <Arrow />
          </DropMark>
        </Field>
        <FormulaTools>
          <ToolButton aria-label="Creazione guidata funzione">
            <Icon name="fx" />
          </ToolButton>
          <ToolButton aria-label="Somma">
            <Icon name="sum" size={10} />
          </ToolButton>
          <ToolButton aria-label="Funzione">
            <Icon name="equals" size={9} />
          </ToolButton>
        </FormulaTools>
        <FormulaInput aria-label="Riga di digitazione" />
      </FormulaBar>
      <Sheet />
      <SheetTabs />
      <Status />
      <Tasks />
    </Window>
  </>
);

export default App;
